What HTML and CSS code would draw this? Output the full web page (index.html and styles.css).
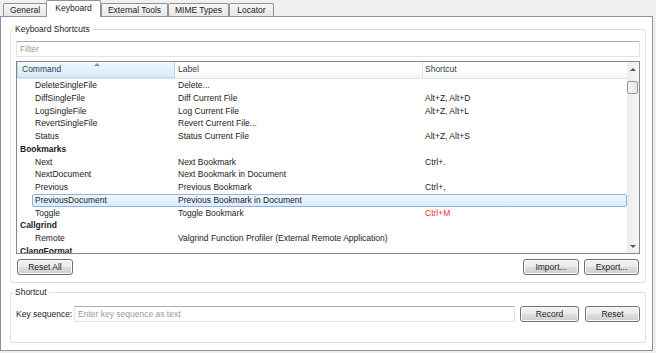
FILE: index.html
```html
<!DOCTYPE html>
<html lang="en">
<head>
    <meta charset="UTF-8">
    <title>Options - Keyboard</title>
    <link rel="stylesheet" href="styles.css">
</head>
<body>
    <div class="tabs">
        <div class="tab tab-general">General</div>
        <div class="tab tab-keyboard active">Keyboard</div>
        <div class="tab tab-tools">External Tools</div>
        <div class="tab tab-mime">MIME Types</div>
        <div class="tab tab-locator">Locator</div>
    </div>

    <div class="pane">
        <fieldset class="group group-shortcuts">
            <legend>Keyboard Shortcuts</legend>
            <input class="field filter" type="text" placeholder="Filter">

            <div class="tree">
                <div class="tree-main">
                    <div class="tree-header">
                        <div class="hcell col-command sorted">Command<span class="sort-arrow"></span></div>
                        <div class="hcell col-label">Label</div>
                        <div class="hcell col-shortcut">Shortcut</div>
                    </div>
                    <div class="tree-rows">
                        <div class="row child"><span class="cell col-command">DeleteSingleFile</span><span class="cell col-label">Delete...</span><span class="cell col-shortcut"></span></div>
                        <div class="row child"><span class="cell col-command">DiffSingleFile</span><span class="cell col-label">Diff Current File</span><span class="cell col-shortcut">Alt+Z, Alt+D</span></div>
                        <div class="row child"><span class="cell col-command">LogSingleFile</span><span class="cell col-label">Log Current File</span><span class="cell col-shortcut">Alt+Z, Alt+L</span></div>
                        <div class="row child"><span class="cell col-command">RevertSingleFile</span><span class="cell col-label">Revert Current File...</span><span class="cell col-shortcut"></span></div>
                        <div class="row child"><span class="cell col-command">Status</span><span class="cell col-label">Status Current File</span><span class="cell col-shortcut">Alt+Z, Alt+S</span></div>
                        <div class="row category">Bookmarks</div>
                        <div class="row child"><span class="cell col-command">Next</span><span class="cell col-label">Next Bookmark</span><span class="cell col-shortcut">Ctrl+.</span></div>
                        <div class="row child"><span class="cell col-command">NextDocument</span><span class="cell col-label">Next Bookmark in Document</span><span class="cell col-shortcut"></span></div>
                        <div class="row child"><span class="cell col-command">Previous</span><span class="cell col-label">Previous Bookmark</span><span class="cell col-shortcut">Ctrl+,</span></div>
                        <div class="row child selected"><span class="cell col-command">PreviousDocument</span><span class="cell col-label">Previous Bookmark in Document</span><span class="cell col-shortcut"></span></div>
                        <div class="row child"><span class="cell col-command">Toggle</span><span class="cell col-label">Toggle Bookmark</span><span class="cell col-shortcut conflict">Ctrl+M</span></div>
                        <div class="row category">Callgrind</div>
                        <div class="row child"><span class="cell col-command">Remote</span><span class="cell col-label">Valgrind Function Profiler (External Remote Application)</span><span class="cell col-shortcut"></span></div>
                        <div class="row category">ClangFormat</div>
                    </div>
                </div>
                <div class="scrollbar">
                    <div class="sb-btn sb-up"><span class="arrow-up"></span></div>
                    <div class="sb-track"><div class="sb-thumb"></div></div>
                    <div class="sb-btn sb-down"><span class="arrow-down"></span></div>
                </div>
            </div>

            <div class="actions">
                <button class="btn">Reset All</button>
                <span class="spacer"></span>
                <button class="btn">Import...</button>
                <button class="btn btn-export">Export...</button>
            </div>
        </fieldset>

        <fieldset class="group group-key">
            <legend>Shortcut</legend>
            <div class="key-row">
                <label class="key-label">Key sequence:</label>
                <input class="field key-input" type="text" placeholder="Enter key sequence as text">
                <button class="btn btn-record">Record</button>
                <button class="btn btn-reset">Reset</button>
            </div>
        </fieldset>
    </div>
</body>
</html>
```

FILE: styles.css
```css
* {
    box-sizing: border-box;
    margin: 0;
    padding: 0;
    font-family: 'Liberation Sans', Arial, sans-serif;
    font-size: 8.5px;
}

body {
    background: #f0f0f0;
    color: #1b1b1b;
    width: 656px;
    height: 353px;
    overflow: hidden;
}

/* tab strip */
.tabs {
    display: flex;
    align-items: flex-end;
    height: 16px;
    padding-left: 3px;
}

.tab {
    height: 13px;
    line-height: 12px;
    text-align: center;
    border: 1px solid #8e9299;
    border-bottom: none;
    border-radius: 2px 2px 0 0;
    background: linear-gradient(#f6f6f6, #e7e7e7);
    color: #222;
}

.tab.active {
    position: relative;
    z-index: 1;
    height: 17px;
    line-height: 14px;
    margin-bottom: -1px;
    background: #fff;
}

.tab-general { width: 44px; }
.tab-keyboard { width: 55px; margin-left: -1px; }
.tab-tools { width: 67px; }
.tab-mime { width: 61px; }
.tab-locator { width: 45px; }

.pane {
    width: 653px;
    height: 335px;
    background: #fff;
    border: 1px solid #8e9299;
    padding: 7px 6px 7px 9px;
}

/* group boxes */
.group {
    min-width: 0;
    border: 1px solid #d5dfe5;
    border-radius: 3px;
    padding: 6px 5px 7px 5px;
}

.group legend {
    line-height: 11px;
    padding: 0 2px;
    margin-left: -3px;
    color: #1b1b1b;
}

.group-key {
    margin-top: 4px;
    padding-top: 8px;
    padding-bottom: 20px;
}

.field {
    height: 16px;
    border: 1px solid #dfe3e8;
    border-top-color: #abadb3;
    background: #fff;
    padding: 0 3px;
    outline: none;
}

.field::placeholder {
    color: #9a9a9a;
}

.filter {
    display: block;
    width: 100%;
}

/* command tree */
.tree {
    display: flex;
    height: 193px;
    margin-top: 4px;
    border: 1px solid #828790;
    overflow: hidden;
}

.tree-main {
    flex: 1;
    min-width: 0;
    overflow: hidden;
}

.tree-header {
    display: flex;
    height: 17px;
    border-bottom: 1px solid #e3e6ea;
    background: linear-gradient(#fff, #fff 50%, #f3f4f6);
}

.hcell {
    line-height: 15px;
    border-right: 1px solid #e3e5e8;
    color: #333a45;
}

.hcell.col-command {
    position: relative;
    width: 158px;
    padding-left: 4px;
}

.hcell.sorted {
    background: linear-gradient(#f3f9fd, #e4f1fb 50%, #d9ecf9);
    border: 1px solid #b6d6ee;
    border-top: none;
}

.sort-arrow {
    position: absolute;
    top: 1px;
    left: 76px;
    border-left: 3px solid transparent;
    border-right: 3px solid transparent;
    border-bottom: 3px solid #8093ad;
}

.hcell.col-label {
    width: 248px;
    padding-left: 3px;
}

.hcell.col-shortcut {
    flex: 1;
    padding-left: 2px;
    border-right: none;
}

.row {
    display: flex;
    height: 12.75px;
    line-height: 10.75px;
    border: 1px solid transparent;
    white-space: nowrap;
}

.row.category {
    padding-left: 2px;
    font-weight: bold;
}

.row.child {
    margin-left: 15px;
}

.row.selected {
    border-color: #8fb4e3;
    border-radius: 2px;
    background: linear-gradient(#f1f7fe, #dbeafc);
}

.cell.col-command {
    width: 142px;
    padding-left: 2px;
}

.cell.col-label {
    width: 248px;
    padding-left: 3px;
}

.cell.col-shortcut {
    flex: 1;
    padding-left: 2px;
}

.conflict {
    color: #ff2a2a;
}

/* scrollbar */
.scrollbar {
    display: flex;
    flex-direction: column;
    width: 12px;
    background: linear-gradient(90deg, #ececec, #f6f6f6);
}

.sb-btn {
    display: flex;
    justify-content: center;
    align-items: center;
}

.sb-up { height: 14px; }
.sb-down { height: 13px; }

.arrow-up {
    border-left: 3px solid transparent;
    border-right: 3px solid transparent;
    border-bottom: 3px solid #555;
}

.arrow-down {
    border-left: 3px solid transparent;
    border-right: 3px solid transparent;
    border-top: 3px solid #555;
}

.sb-track {
    flex: 1;
}

.sb-thumb {
    width: 11px;
    height: 13px;
    margin-top: 5px;
    border: 1px solid #979797;
    border-radius: 2px;
    background: linear-gradient(90deg, #f4f4f4, #e6e6e6);
}

/* buttons */
.btn {
    height: 16px;
    border: 1px solid #707070;
    border-radius: 3px;
    background: linear-gradient(#f2f2f2, #ebebeb 50%, #dddddd 50%, #cfcfcf);
    box-shadow: inset 0 0 0 1px #fbfbfb;
    color: #1b1b1b;
    line-height: 13px;
}

.actions {
    display: flex;
    gap: 5px;
    margin-top: 5px;
    padding: 0 1px;
}

.actions .btn {
    width: 56px;
}

.actions .btn-export {
    width: 55px;
}

.spacer {
    flex: 1;
}

.key-row {
    display: flex;
    align-items: center;
}

.key-label {
    width: 58px;
    color: #1b1b1b;
}

.key-input {
    flex: 1;
    margin-right: 5px;
}

.btn-record {
    width: 59px;
    margin-right: 6px;
}

.btn-reset {
    width: 55px;
}
```
